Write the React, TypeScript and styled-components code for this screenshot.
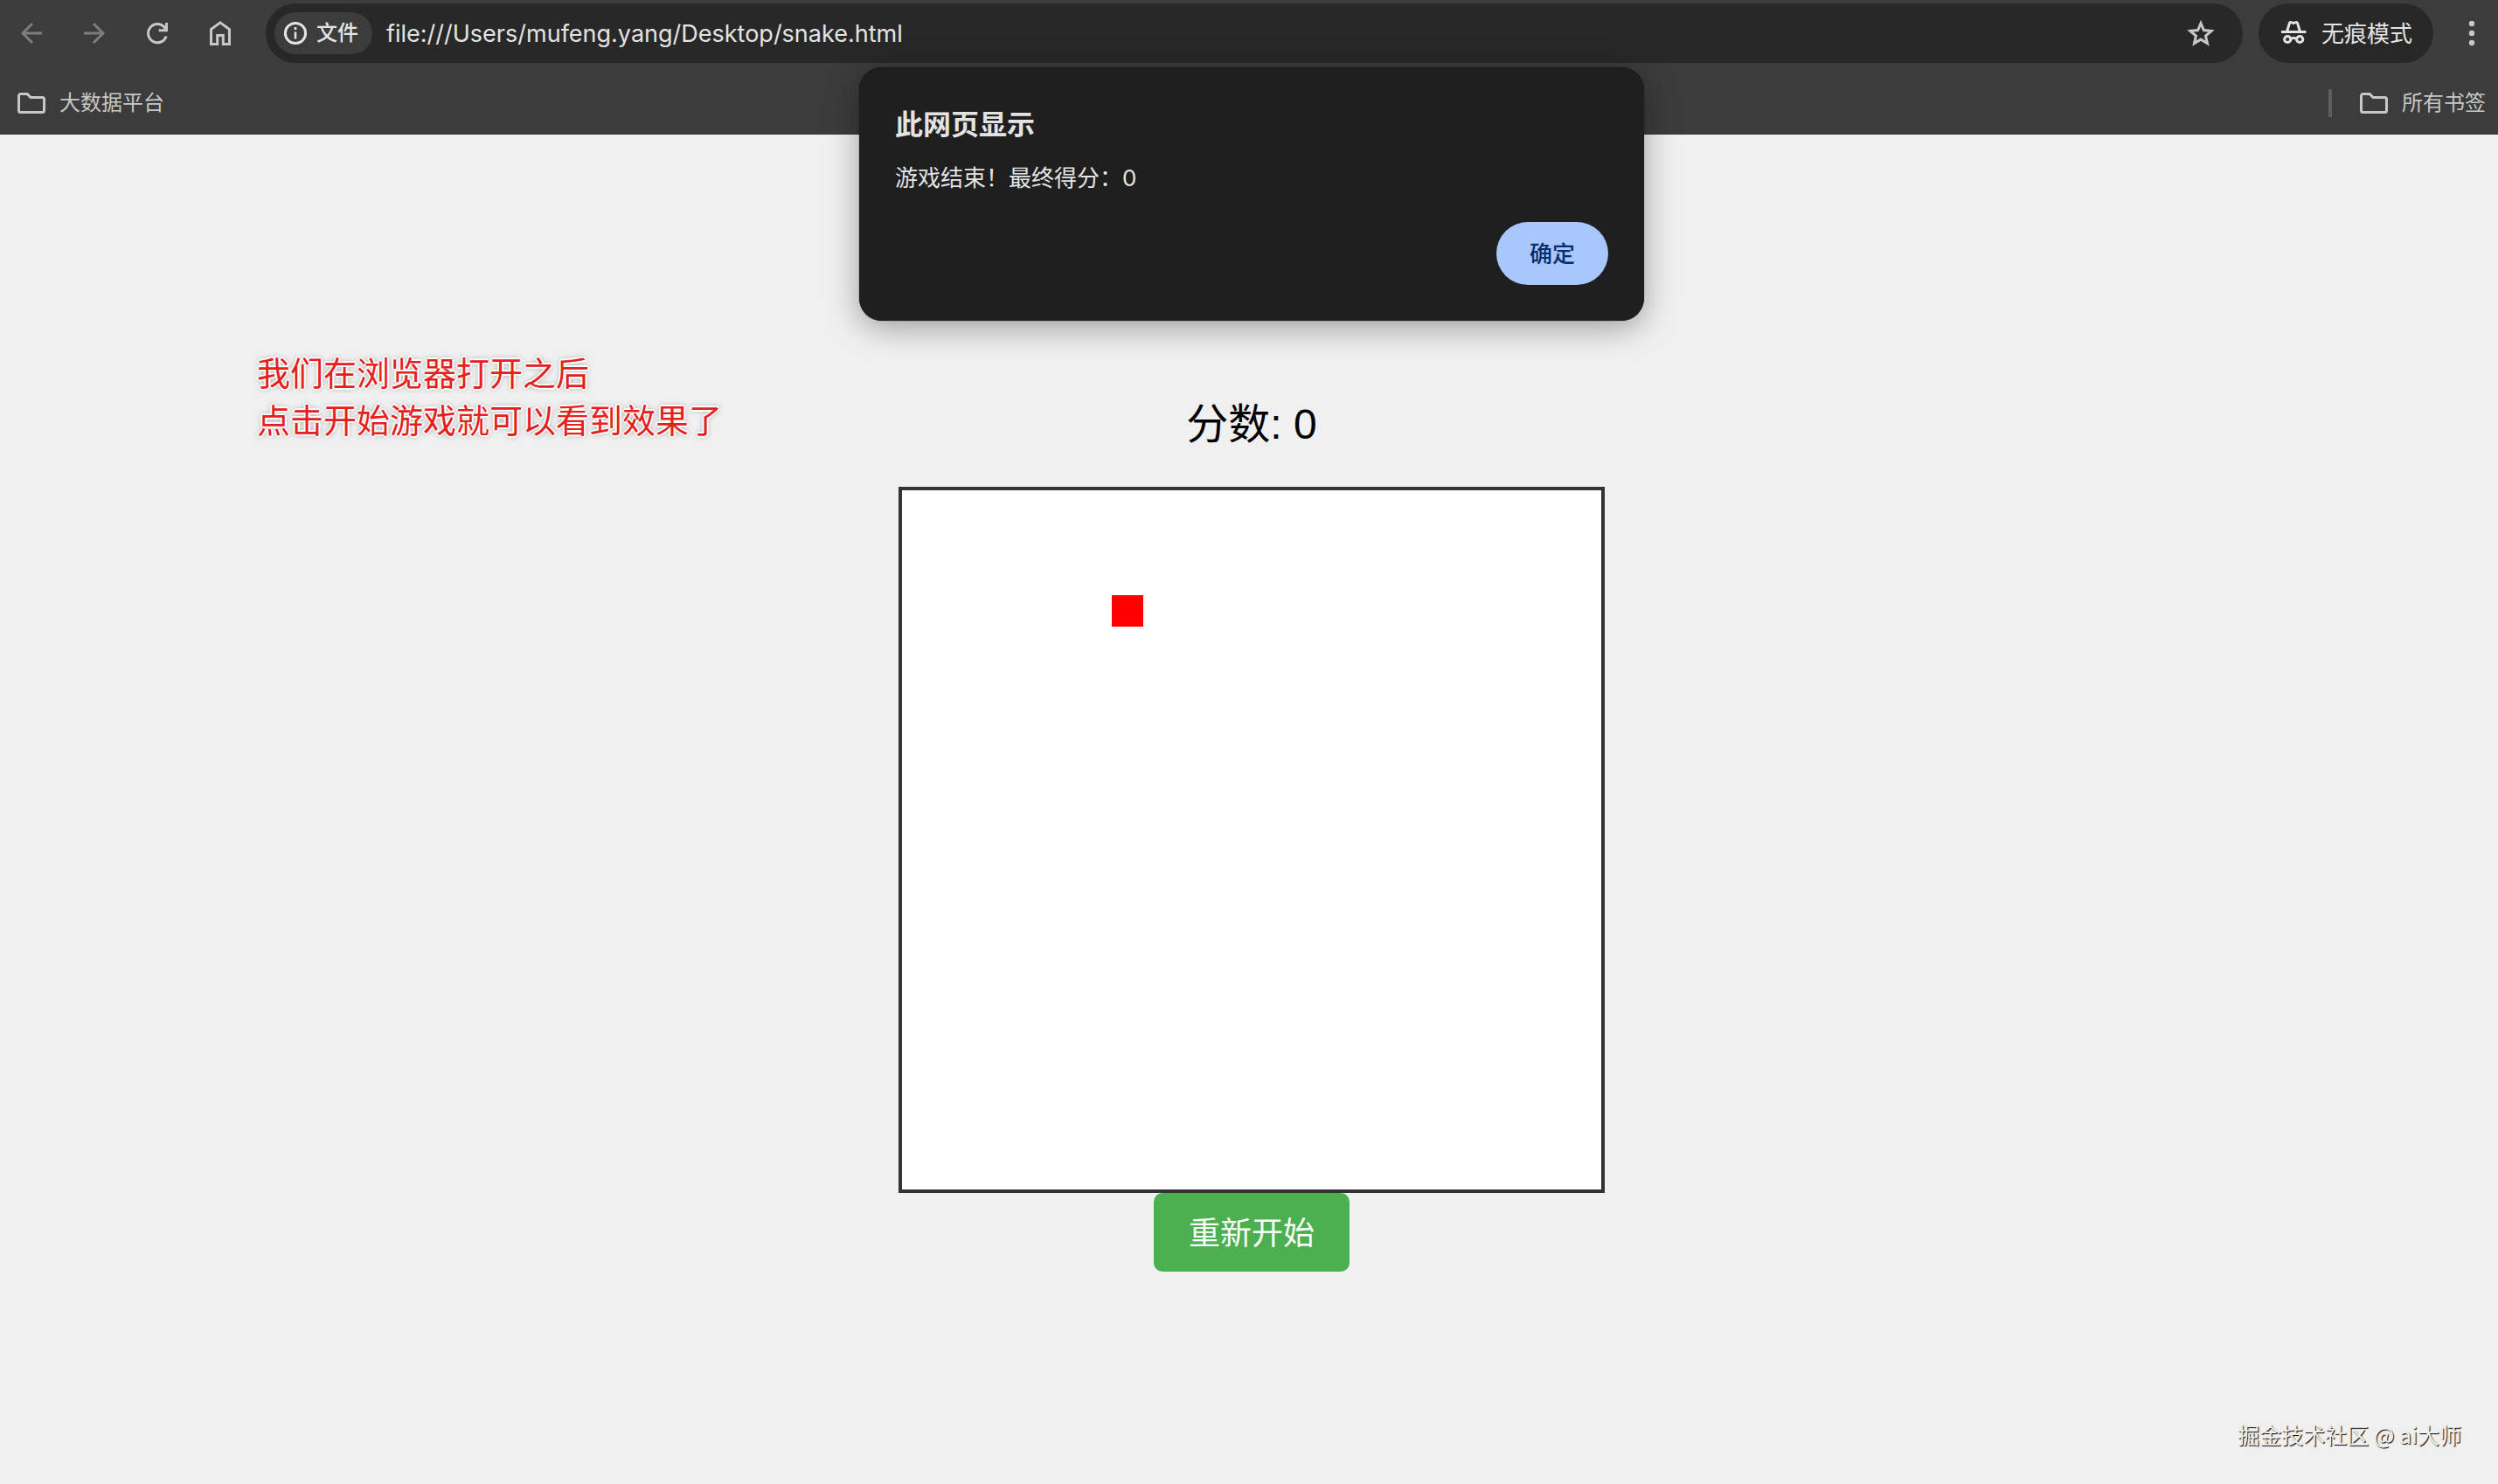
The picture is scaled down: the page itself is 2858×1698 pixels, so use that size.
import React from "react";
import styled, { createGlobalStyle } from "styled-components";

const GlobalStyle = createGlobalStyle`
  *, *::before, *::after { box-sizing: border-box; }
  body {
    margin: 0;
    background: #f0f0f0;
    font-family: Inter, "Noto Sans CJK SC", sans-serif;
  }
  button, input { font: inherit; color: inherit; }
  button { border: 0; padding: 0; background: none; cursor: pointer; }
`;

const Window = styled.div`
  position: relative;
  display: flex;
  flex-direction: column;
  min-height: 100vh;
  overflow: hidden;
`;

const Chrome = styled.header`
  background: #3c3c3c;
  color: #c7c7c7;
`;

const Toolbar = styled.div`
  display: flex;
  align-items: center;
  height: 76px;
  padding: 4px 14px 4px 20px;
`;

const NavButtons = styled.nav`
  display: flex;
  gap: 40px;
  margin-right: 36px;
`;

const IconButton = styled.button`
  display: flex;
  flex: none;
  color: #c7c7c7;
  &:disabled { color: #7c7c7c; }
`;

const Icon = styled.svg.attrs({ viewBox: "0 0 32 32", "aria-hidden": true })`
  display: block;
  flex: none;
  width: 32px;
  height: 32px;
  fill: none;
  stroke: currentColor;
  stroke-width: 3;
`;

const AddressBar = styled.div`
  display: flex;
  flex: 1;
  align-items: center;
  height: 68px;
  padding: 0 32px 0 10px;
  border-radius: 34px;
  background: #282828;
`;

const SiteChip = styled.button`
  display: flex;
  flex: none;
  align-items: center;
  gap: 8px;
  height: 48px;
  padding: 0 16px 0 8px;
  border-radius: 24px;
  background: #3c3c3c;
  color: #e3e3e3;
  font-size: 24px;
  font-weight: 500;
  line-height: 32px;
`;

const UrlInput = styled.input`
  flex: 1;
  min-width: 0;
  padding: 2px 16px 0;
  border: 0;
  outline: 0;
  background: none;
  color: #e3e3e3;
  font-size: 27px;
  line-height: 40px;
`;

const IncognitoChip = styled.button`
  display: flex;
  flex: none;
  align-items: center;
  gap: 16px;
  height: 68px;
  margin: 0 28px 0 18px;
  padding: 2px 24px 0;
  border-radius: 34px;
  background: #282828;
  color: #e3e3e3;
  font-size: 26px;
  font-weight: 400;
  line-height: 32px;
`;

const BookmarkBar = styled.div`
  display: flex;
  align-items: center;
  justify-content: space-between;
  height: 78px;
  padding: 6px 14px 0 20px;
`;

const Bookmark = styled.button`
  display: flex;
  align-items: center;
  gap: 16px;
  font-size: 24px;
  line-height: 32px;
`;

const AllBookmarks = styled.div`
  display: flex;
  align-items: center;
  gap: 32px;
`;

const Separator = styled.span`
  width: 4px;
  height: 32px;
  background: #5e5e5e;
`;

const Page = styled.main`
  display: flex;
  flex: 1;
  flex-direction: column;
  align-items: center;
  padding: 304px 0 0 6px;
  font-family: "Liberation Sans", "Noto Sans CJK SC", sans-serif;
`;

const Score = styled.div`
  margin-bottom: 43px;
  color: #000;
  font-size: 48px;
  line-height: 56px;
`;

const Board = styled.div`
  display: grid;
  grid-template: repeat(20, 40px) / repeat(20, 40px);
  border: 4px solid #333;
  background: #fff;
`;

const Food = styled.span<{ $column: number; $row: number }>`
  grid-column: ${(p) => p.$column};
  grid-row: ${(p) => p.$row};
  width: 36px;
  height: 36px;
  background: #f00;
`;

const RestartButton = styled.button`
  height: 90px;
  padding: 4px 40px 0;
  border-radius: 10px;
  background: #4caf50;
  color: #fff;
  font-size: 36px;
  line-height: 48px;
`;

const DialogLayer = styled.div`
  position: absolute;
  inset: 77px 0 auto 6px;
  display: flex;
  justify-content: center;
`;

const Dialog = styled.section`
  display: flex;
  flex-direction: column;
  width: 898px;
  padding: 42px 41px 41px;
  border-radius: 26px;
  background: #1f1f1f;
  color: #e3e3e3;
  box-shadow: 0 0 1px #000, 0 8px 36px rgba(0, 0, 0, 0.35);
`;

const DialogTitle = styled.h1`
  margin: 0 0 17px;
  font-size: 32px;
  font-weight: 700;
  line-height: 48px;
`;

const DialogText = styled.p`
  margin: 0 0 30px;
  font-size: 26px;
  line-height: 40px;
`;

const ConfirmButton = styled.button`
  align-self: flex-end;
  height: 72px;
  padding: 2px 38px 0;
  border-radius: 36px;
  background: #a8c7fa;
  color: #062e6f;
  font-size: 26px;
  font-weight: 500;
  line-height: 32px;
`;

const Annotation = styled.p`
  position: absolute;
  top: 398px;
  left: 294px;
  margin: 0;
  color: #e6201c;
  font-family: "Noto Sans CJK SC", sans-serif;
  font-size: 38px;
  line-height: 54px;
  text-shadow: -2px 0 #fff, 2px 0 #fff, 0 -2px #fff, 0 2px #fff,
    1px 1px #fff, -1px -1px #fff, 0 0 6px rgba(0, 0, 0, 0.5);
`;

const Watermark = styled.p`
  position: absolute;
  right: 42px;
  bottom: 37px;
  margin: 0;
  color: #f0f0f0;
  font-family: "Noto Sans CJK SC", sans-serif;
  font-size: 25px;
  line-height: 40px;
  text-shadow: 1px 1px 1px #000;
`;

const FolderIcon = () => (
  <Icon>
    <path d="M3.5 5.6h7.8l3.8 4h13.4a2 2 0 0 1 2 2v12.9a2 2 0 0 1-2 2h-25a2 2 0 0 1-2-2V7.6a2 2 0 0 1 2-2z" />
  </Icon>
);

export default function App() {
  return (
    <>
      <GlobalStyle />
      <Window>
        <Chrome>
          <Toolbar>
            <NavButtons aria-label="导航">
              <IconButton disabled aria-label="后退">
                <Icon><path d="M28 16H6M17 5 6 16l11 11" /></Icon>
              </IconButton>
              <IconButton disabled aria-label="前进">
                <Icon><path d="M4 16h22M15 5l11 11-11 11" /></Icon>
              </IconButton>
              <IconButton aria-label="重新加载">
                <Icon>
                  <path d="M26.2 19.5A10.6 10.6 0 1 1 24 9l2.5 3.2M26.5 4v8.8h-8.8" />
                </Icon>
              </IconButton>
              <IconButton aria-label="主页">
                <Icon>
                  <path d="M5.5 28.5V11.6L16 3.8l10.5 7.8v16.9h-7.2v-10h-6.6v10z" />
                </Icon>
              </IconButton>
            </NavButtons>
            <AddressBar>
              <SiteChip>
                <Icon>
                  <circle cx="16" cy="16" r="11.6" />
                  <path d="M16 14.5v8M16 9v3" strokeWidth="2.6" />
                </Icon>
                文件
              </SiteChip>
              <UrlInput
                aria-label="地址"
                defaultValue="file:///Users/mufeng.yang/Desktop/snake.html"
              />
              <IconButton aria-label="收藏">
                <Icon>
                  <path d="m16 4.6 3.4 8 8.7.8-6.6 5.7 2 8.5-7.5-4.5-7.5 4.5 2-8.5-6.6-5.7 8.7-.8z" />
                </Icon>
              </IconButton>
            </AddressBar>
            <IncognitoChip>
              <Icon>
                <path d="M2 13.6h28.4M8.6 13 11.4 3.6q.5-1.6 2-1l2.6.8 2.6-.8q1.5-.6 2 1L23.4 13" />
                <circle cx="9.2" cy="22" r="3.6" />
                <circle cx="23.2" cy="22" r="3.6" />
                <path d="M12.500 21.500q3.700-2 7.400 0" />
              </Icon>
              无痕模式
            </IncognitoChip>
            <IconButton aria-label="菜单">
              <Icon>
                <g fill="currentColor" stroke="none">
                  <circle cx="16" cy="5" r="3.200" />
                  <circle cx="16" cy="16" r="3.200" />
                  <circle cx="16" cy="27" r="3.200" />
                </g>
              </Icon>
            </IconButton>
          </Toolbar>
          <BookmarkBar>
            <Bookmark>
              <FolderIcon />
              大数据平台
            </Bookmark>
            <AllBookmarks>
              <Separator />
              <Bookmark>
                <FolderIcon />
                所有书签
              </Bookmark>
            </AllBookmarks>
          </BookmarkBar>
        </Chrome>
        <Page>
          <Score>分数: 0</Score>
          <Board>
            <Food $column={7} $row={4} />
          </Board>
          <RestartButton>重新开始</RestartButton>
        </Page>
        <Annotation>
          我们在浏览器打开之后
          <br />
          点击开始游戏就可以看到效果了
        </Annotation>
        <Watermark>掘金技术社区 @ ai大师</Watermark>
        <DialogLayer>
          <Dialog role="alertdialog" aria-labelledby="dialog-title">
            <DialogTitle id="dialog-title">此网页显示</DialogTitle>
            <DialogText>游戏结束！最终得分：0</DialogText>
            <ConfirmButton>确定</ConfirmButton>
          </Dialog>
        </DialogLayer>
      </Window>
    </>
  );
}
